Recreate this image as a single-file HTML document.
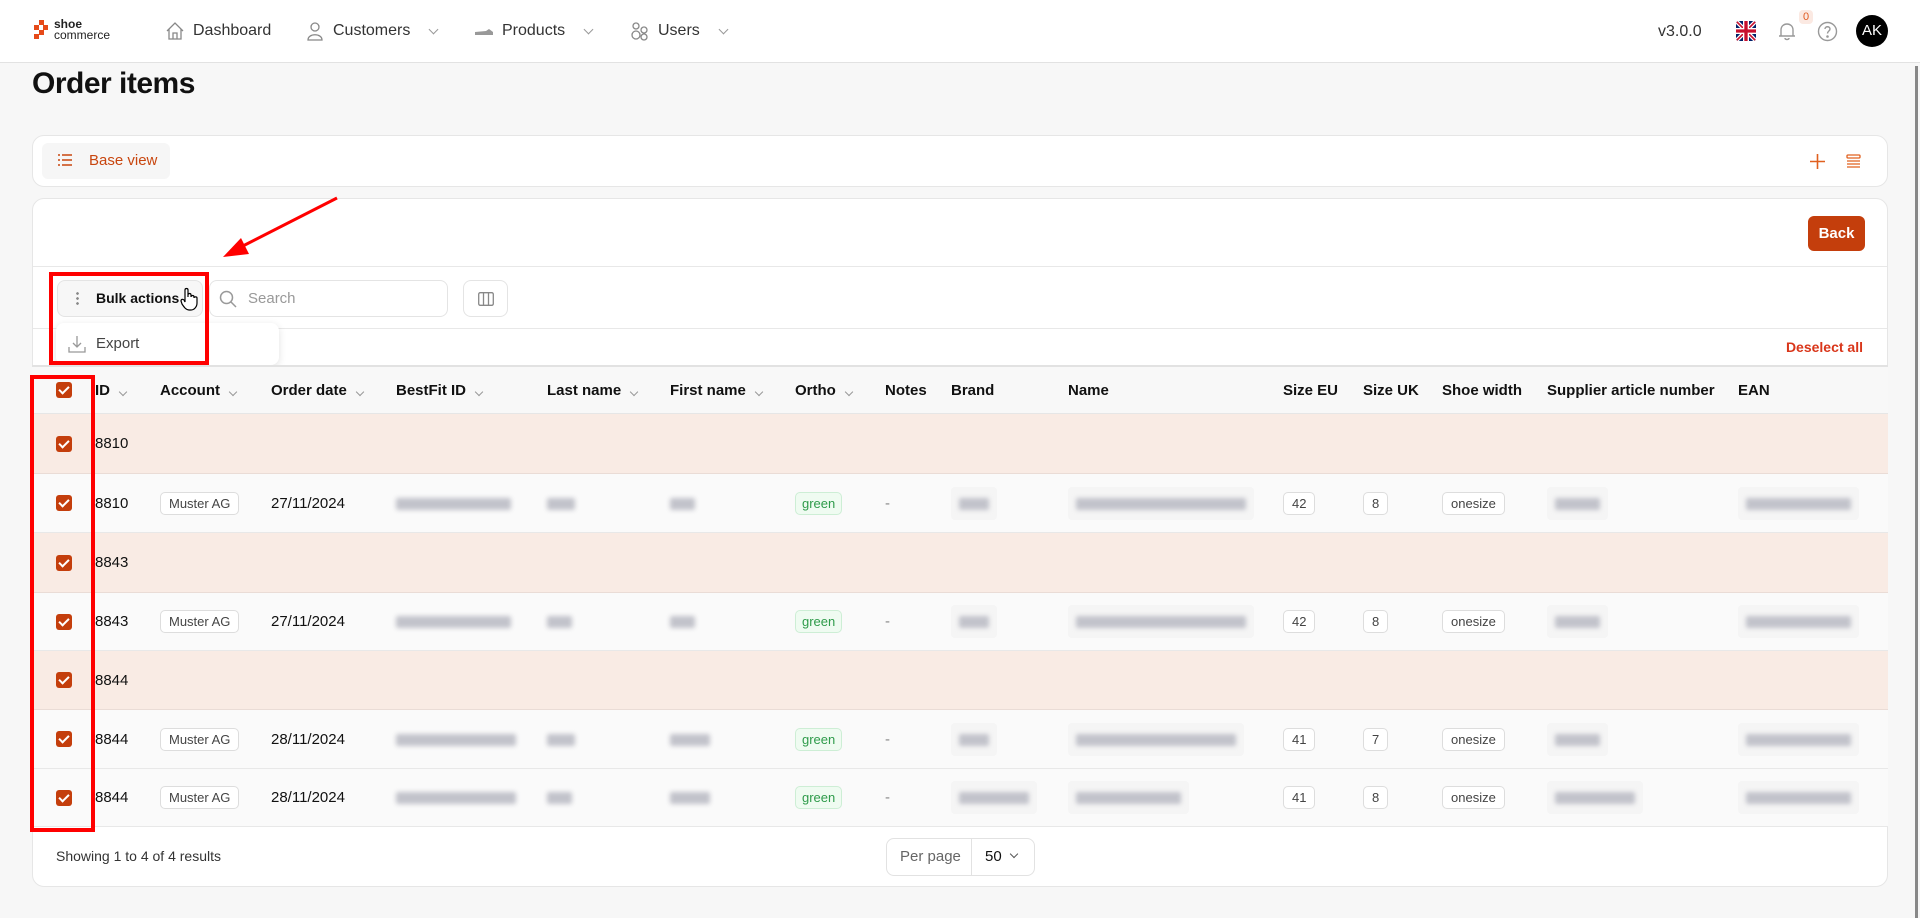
<!DOCTYPE html>
<html><head><meta charset="utf-8"><style>
*{box-sizing:border-box;margin:0;padding:0}
body{width:1920px;height:918px;overflow:hidden;background:#f7f7f7;font-family:"Liberation Sans",sans-serif;color:#111;position:relative}
.hdr{position:absolute;left:0;top:0;width:1920px;height:63px;background:#fff;border-bottom:1px solid #e2e2e2}
.nav{position:absolute;top:21px;font-size:16px;color:#333;display:flex;align-items:center;gap:8px}
.chev{display:inline-block;width:7px;height:7px;border-right:1.3px solid #999;border-bottom:1.3px solid #999;transform:rotate(45deg);margin:-4px 0 0 12px}
h1{position:absolute;left:32px;top:67px;font-size:30px;font-weight:700;letter-spacing:-.5px}
.card{position:absolute;left:32px;width:1856px;background:#fff;border:1px solid #e6e6e6;border-radius:12px}
.row{position:absolute;left:32px;width:1856px;display:flex;align-items:center;font-size:15px}
.row>div{flex:none;white-space:nowrap}
.cb{width:16px;height:16px;border-radius:3px;background:#c43e0c;margin-left:24px;margin-right:23px;position:relative}
.cb:after{content:"";position:absolute;left:5px;top:2px;width:4px;height:8px;border-right:2px solid #fff;border-bottom:2px solid #fff;transform:rotate(45deg)}
.h{font-weight:600;font-size:15px}
.h .chev{width:6px;height:6px;margin-left:10px}
.grp{background:#f9ebe4;border-bottom:1px solid #eadcd6}
.dat{background:#fafafa;border-bottom:1px solid #e8e8e8}
.tag{display:inline-block;border:1px solid #ddd;border-radius:5px;padding:3px 8px;font-size:13px;color:#444;background:#fff}
.grn{display:inline-block;border:1px solid #cdeed5;border-radius:5px;padding:3px 6px;font-size:13px;color:#2e9b4a;background:#effbf1}
.bl{display:inline-block;height:12px;background:#c2c3cb;filter:blur(2.5px);border-radius:2px;vertical-align:middle}
.blb{display:inline-block;padding:8px;background:#f5f5f5;border-radius:4px}
.red{position:absolute;border:4px solid #f00}
</style></head><body>
<div class="hdr">
  <svg style="position:absolute;left:34px;top:20px" width="14" height="20" viewBox="0 0 14 20"><rect x="5" y="0" width="5" height="5" fill="#e64a19"/><rect x="0" y="5" width="5" height="5" fill="#e64a19"/><rect x="9" y="5" width="5" height="5" fill="#e64a19"/><rect x="5" y="10" width="5" height="5" fill="#e64a19"/><rect x="0" y="14" width="5" height="5" fill="#e64a19"/></svg>
  <div style="position:absolute;left:54px;top:19px;font-size:12px;line-height:11px;color:#222"><b>shoe</b><br>commerce</div>
  <div class="nav" style="left:165px"><svg width="20" height="20" viewBox="0 0 20 20" fill="none" stroke="#888" stroke-width="1.3"><path d="M2 10 L10 2 L18 10 M4 8 V18 H16 V8 M8 18 V12 H12 V18"/></svg>Dashboard</div>
  <div class="nav" style="left:305px"><svg width="20" height="20" viewBox="0 0 20 20" fill="none" stroke="#888" stroke-width="1.3"><circle cx="10" cy="6" r="4"/><path d="M3 19 C3 12 17 12 17 19 Z"/></svg>Customers<span class="chev"></span></div>
  <div class="nav" style="left:474px"><svg width="20" height="20" viewBox="0 0 20 20"><path d="M1 14 L1 11 L12 10 L15 8 L19 11 L19 14 Z" fill="#999"/></svg>Products<span class="chev"></span></div>
  <div class="nav" style="left:630px"><svg width="20" height="20" viewBox="0 0 20 20" fill="none" stroke="#888" stroke-width="1.3"><circle cx="6" cy="5" r="3"/><circle cx="14" cy="9" r="3"/><circle cx="6" cy="14" r="4"/><circle cx="14" cy="16" r="3"/></svg>Users<span class="chev"></span></div>
  <div style="position:absolute;left:1658px;top:23px;font-size:16px;color:#333">v3.0.0</div>
  <svg style="position:absolute;left:1736px;top:21px" width="20" height="20" viewBox="0 0 60 60"><clipPath id="c"><rect width="60" height="60" rx="8"/></clipPath><g clip-path="url(#c)"><rect width="60" height="60" fill="#012169"/><path d="M0 0L60 60M60 0L0 60" stroke="#fff" stroke-width="12"/><path d="M0 0L60 60M60 0L0 60" stroke="#C8102E" stroke-width="5"/><path d="M30 0V60M0 30H60" stroke="#fff" stroke-width="18"/><path d="M30 0V60M0 30H60" stroke="#C8102E" stroke-width="10"/></g></svg>
  <svg style="position:absolute;left:1777px;top:21px" width="20" height="20" viewBox="0 0 20 20" fill="none" stroke="#999" stroke-width="1.4"><path d="M4 15 V9 C4 5 7 3 10 3 C13 3 16 5 16 9 V15 H4 M2 15 H18 M8 17 C8 19 12 19 12 17"/></svg>
  <div style="position:absolute;left:1799px;top:10px;width:14px;height:14px;background:#fbe9e2;border-radius:4px;font-size:11px;color:#e05a20;text-align:center;line-height:14px">0</div>
  <svg style="position:absolute;left:1817px;top:21px" width="21" height="21" viewBox="0 0 21 21" fill="none" stroke="#999" stroke-width="1.4"><circle cx="10.5" cy="10.5" r="9"/><path d="M8 8 C8 5 13 5 13 8 C13 10 10.5 10 10.5 12.5"/><circle cx="10.5" cy="15.5" r=".6" fill="#999"/></svg>
  <div style="position:absolute;left:1856px;top:15px;width:32px;height:32px;border-radius:50%;background:#000;color:#fff;font-size:15px;text-align:center;line-height:32px">AK</div>
</div>
<div style="position:absolute;left:1915px;top:66px;width:3px;height:852px;background:#888"></div>
<h1>Order items</h1>
<div class="card" style="top:135px;height:52px">
  <div style="position:absolute;left:9px;top:7px;width:128px;height:36px;background:#f6f6f6;border-radius:6px;color:#c8460f;font-size:15px;line-height:36px;padding-left:47px">Base view</div>
  <svg style="position:absolute;left:25px;top:18px" width="14" height="12" viewBox="0 0 14 12" stroke="#c8460f" stroke-width="1.5"><path d="M0 1H2M4 1H14M0 6H2M4 6H14M0 11H2M4 11H14"/></svg>
  <svg style="position:absolute;left:1777px;top:18px" width="15" height="15" stroke="#e0601f" stroke-width="1.6"><path d="M7.5 0V15M0 7.5H15"/></svg>
  <svg style="position:absolute;left:1813px;top:18px" width="15" height="15" stroke="#e0601f" stroke-width="1.3" fill="none"><rect x="1" y="1" width="13" height="3" rx="1"/><path d="M1 7H14M1 10H14M1 13H14"/></svg>
</div>
<div class="card" style="top:198px;height:689px">
  <div style="position:absolute;left:1775px;top:17px;width:57px;height:35px;background:#c43e0c;border-radius:6px;color:#fff;font-weight:700;font-size:15px;text-align:center;line-height:35px">Back</div>
  <div style="position:absolute;left:0;top:67px;width:100%;border-top:1px solid #e8e8e8"></div>
  <div style="position:absolute;left:24px;top:81px;width:146px;height:37px;border:1px solid #e4e4e4;border-radius:8px;background:#f7f7f7;font-size:14px;font-weight:600;line-height:35px;padding-left:38px">Bulk actions</div>
  <div style="position:absolute;left:43px;top:92px;width:3px;height:15px;background:radial-gradient(circle,#888 1.2px,transparent 1.5px) 0 0/3px 5px"></div>
  <div style="position:absolute;left:176px;top:81px;width:239px;height:37px;border:1px solid #e4e4e4;border-radius:8px;font-size:15px;color:#999;line-height:35px;padding-left:38px">Search</div>
  <svg style="position:absolute;left:186px;top:91px" width="18" height="18" fill="none" stroke="#999" stroke-width="1.5"><circle cx="7.5" cy="7.5" r="6"/><path d="M12 12L17 17"/></svg>
  <div style="position:absolute;left:430px;top:81px;width:45px;height:37px;border:1px solid #e4e4e4;border-radius:8px"></div>
  <svg style="position:absolute;left:445px;top:93px" width="16" height="14" fill="none" stroke="#888" stroke-width="1.3"><rect x=".7" y=".7" width="14.6" height="12.6" rx="1.5"/><path d="M5.5 1V13M10.5 1V13"/></svg>
  <div style="position:absolute;left:0;top:129px;width:100%;border-top:1px solid #e8e8e8"></div>
  <div style="position:absolute;right:24px;top:140px;color:#d9361a;font-size:14px;font-weight:600">Deselect all</div>
</div>
<div style="position:absolute;left:56px;top:323px;width:223px;height:42px;background:#fff;border-radius:8px;box-shadow:0 2px 8px rgba(0,0,0,.12);font-size:15px;color:#444;line-height:42px;padding-left:40px">Export</div>
<svg style="position:absolute;left:68px;top:335px" width="18" height="18" fill="none" stroke="#999" stroke-width="1.3"><path d="M9 1V12M5 8L9 12L13 8M1 12V17H17V12"/></svg>
<svg style="position:absolute;left:180px;top:287px" width="18" height="24" viewBox="0 0 18 24" fill="#fff" stroke="#000" stroke-width="1.2"><path d="M5 12V3C5 1 8 1 8 3V10V8C8 6 11 6 11 8V10C11 8 14 8 14 10V11C14 9.5 17 9.5 17 11V16C17 20 14 23 11 23H9C6 23 4 20 2 17L1 14C1 12 3 12 4 13L5 15Z"/></svg>

<div class="row h" style="top:365px;height:49px;background:#f8f8f8;border-top:2px solid #e2e2e2;border-bottom:1px solid #e6e6e6">
<div class="cb"></div><div style="width:65px">ID<span class="chev"></span></div><div style="width:111px">Account<span class="chev"></span></div><div style="width:125px">Order date<span class="chev"></span></div><div style="width:151px">BestFit ID<span class="chev"></span></div><div style="width:123px">Last name<span class="chev"></span></div><div style="width:125px">First name<span class="chev"></span></div><div style="width:90px">Ortho<span class="chev"></span></div><div style="width:66px">Notes</div><div style="width:117px">Brand</div><div style="width:215px">Name</div><div style="width:80px">Size EU</div><div style="width:79px">Size UK</div><div style="width:105px">Shoe width</div><div style="width:191px">Supplier article number</div><div>EAN</div></div>

<div class="row grp" style="top:414px;height:60px"><div class="cb"></div><div>8810</div></div>
<div class="row dat" style="top:474px;height:59px"><div class="cb"></div><div style="width:65px">8810</div><div style="width:111px"><span class="tag">Muster AG</span></div><div style="width:125px">27/11/2024</div><div style="width:151px"><span class="bl" style="width:115px"></span></div><div style="width:123px"><span class="bl" style="width:28px"></span></div><div style="width:125px"><span class="bl" style="width:25px"></span></div><div style="width:90px"><span class="grn">green</span></div><div style="width:66px;color:#888">-</div><div style="width:117px"><span class="blb"><span class="bl" style="width:30px"></span></span></div><div style="width:215px"><span class="blb"><span class="bl" style="width:170px"></span></span></div><div style="width:80px"><span class="tag">42</span></div><div style="width:79px"><span class="tag">8</span></div><div style="width:105px"><span class="tag">onesize</span></div><div style="width:191px"><span class="blb"><span class="bl" style="width:45px"></span></span></div><div><span class="blb"><span class="bl" style="width:105px"></span></span></div></div>
<div class="row grp" style="top:533px;height:60px"><div class="cb"></div><div>8843</div></div>
<div class="row dat" style="top:593px;height:58px"><div class="cb"></div><div style="width:65px">8843</div><div style="width:111px"><span class="tag">Muster AG</span></div><div style="width:125px">27/11/2024</div><div style="width:151px"><span class="bl" style="width:115px"></span></div><div style="width:123px"><span class="bl" style="width:25px"></span></div><div style="width:125px"><span class="bl" style="width:25px"></span></div><div style="width:90px"><span class="grn">green</span></div><div style="width:66px;color:#888">-</div><div style="width:117px"><span class="blb"><span class="bl" style="width:30px"></span></span></div><div style="width:215px"><span class="blb"><span class="bl" style="width:170px"></span></span></div><div style="width:80px"><span class="tag">42</span></div><div style="width:79px"><span class="tag">8</span></div><div style="width:105px"><span class="tag">onesize</span></div><div style="width:191px"><span class="blb"><span class="bl" style="width:45px"></span></span></div><div><span class="blb"><span class="bl" style="width:105px"></span></span></div></div>
<div class="row grp" style="top:651px;height:59px"><div class="cb"></div><div>8844</div></div>
<div class="row dat" style="top:710px;height:59px"><div class="cb"></div><div style="width:65px">8844</div><div style="width:111px"><span class="tag">Muster AG</span></div><div style="width:125px">28/11/2024</div><div style="width:151px"><span class="bl" style="width:120px"></span></div><div style="width:123px"><span class="bl" style="width:28px"></span></div><div style="width:125px"><span class="bl" style="width:40px"></span></div><div style="width:90px"><span class="grn">green</span></div><div style="width:66px;color:#888">-</div><div style="width:117px"><span class="blb"><span class="bl" style="width:30px"></span></span></div><div style="width:215px"><span class="blb"><span class="bl" style="width:160px"></span></span></div><div style="width:80px"><span class="tag">41</span></div><div style="width:79px"><span class="tag">7</span></div><div style="width:105px"><span class="tag">onesize</span></div><div style="width:191px"><span class="blb"><span class="bl" style="width:45px"></span></span></div><div><span class="blb"><span class="bl" style="width:105px"></span></span></div></div>
<div class="row dat" style="top:769px;height:58px"><div class="cb"></div><div style="width:65px">8844</div><div style="width:111px"><span class="tag">Muster AG</span></div><div style="width:125px">28/11/2024</div><div style="width:151px"><span class="bl" style="width:120px"></span></div><div style="width:123px"><span class="bl" style="width:25px"></span></div><div style="width:125px"><span class="bl" style="width:40px"></span></div><div style="width:90px"><span class="grn">green</span></div><div style="width:66px;color:#888">-</div><div style="width:117px"><span class="blb"><span class="bl" style="width:70px"></span></span></div><div style="width:215px"><span class="blb"><span class="bl" style="width:105px"></span></span></div><div style="width:80px"><span class="tag">41</span></div><div style="width:79px"><span class="tag">8</span></div><div style="width:105px"><span class="tag">onesize</span></div><div style="width:191px"><span class="blb"><span class="bl" style="width:80px"></span></span></div><div><span class="blb"><span class="bl" style="width:105px"></span></span></div></div>

<div style="position:absolute;left:56px;top:848px;font-size:14px;color:#333">Showing 1 to 4 of 4 results</div>
<div style="position:absolute;left:886px;top:838px;width:149px;height:38px;border:1px solid #e2e2e2;border-radius:8px;font-size:15px;line-height:36px">
  <span style="position:absolute;left:13px;color:#666">Per page</span>
  <span style="position:absolute;left:84px;top:0;height:36px;border-left:1px solid #e2e2e2"></span>
  <span style="position:absolute;left:98px">50</span><span class="chev" style="position:absolute;left:112px;top:16px;width:6px;height:6px;border-color:#555"></span>
</div>

<div class="red" style="left:49px;top:272px;width:160px;height:93px"></div>
<div class="red" style="left:30px;top:375px;width:65px;height:457px"></div>
<svg style="position:absolute;left:215px;top:192px" width="130" height="75"><path d="M122 6L20 58" stroke="#f00" stroke-width="3"/><path d="M8 65L26 46L34 62Z" fill="#f00"/></svg>
</body></html>
